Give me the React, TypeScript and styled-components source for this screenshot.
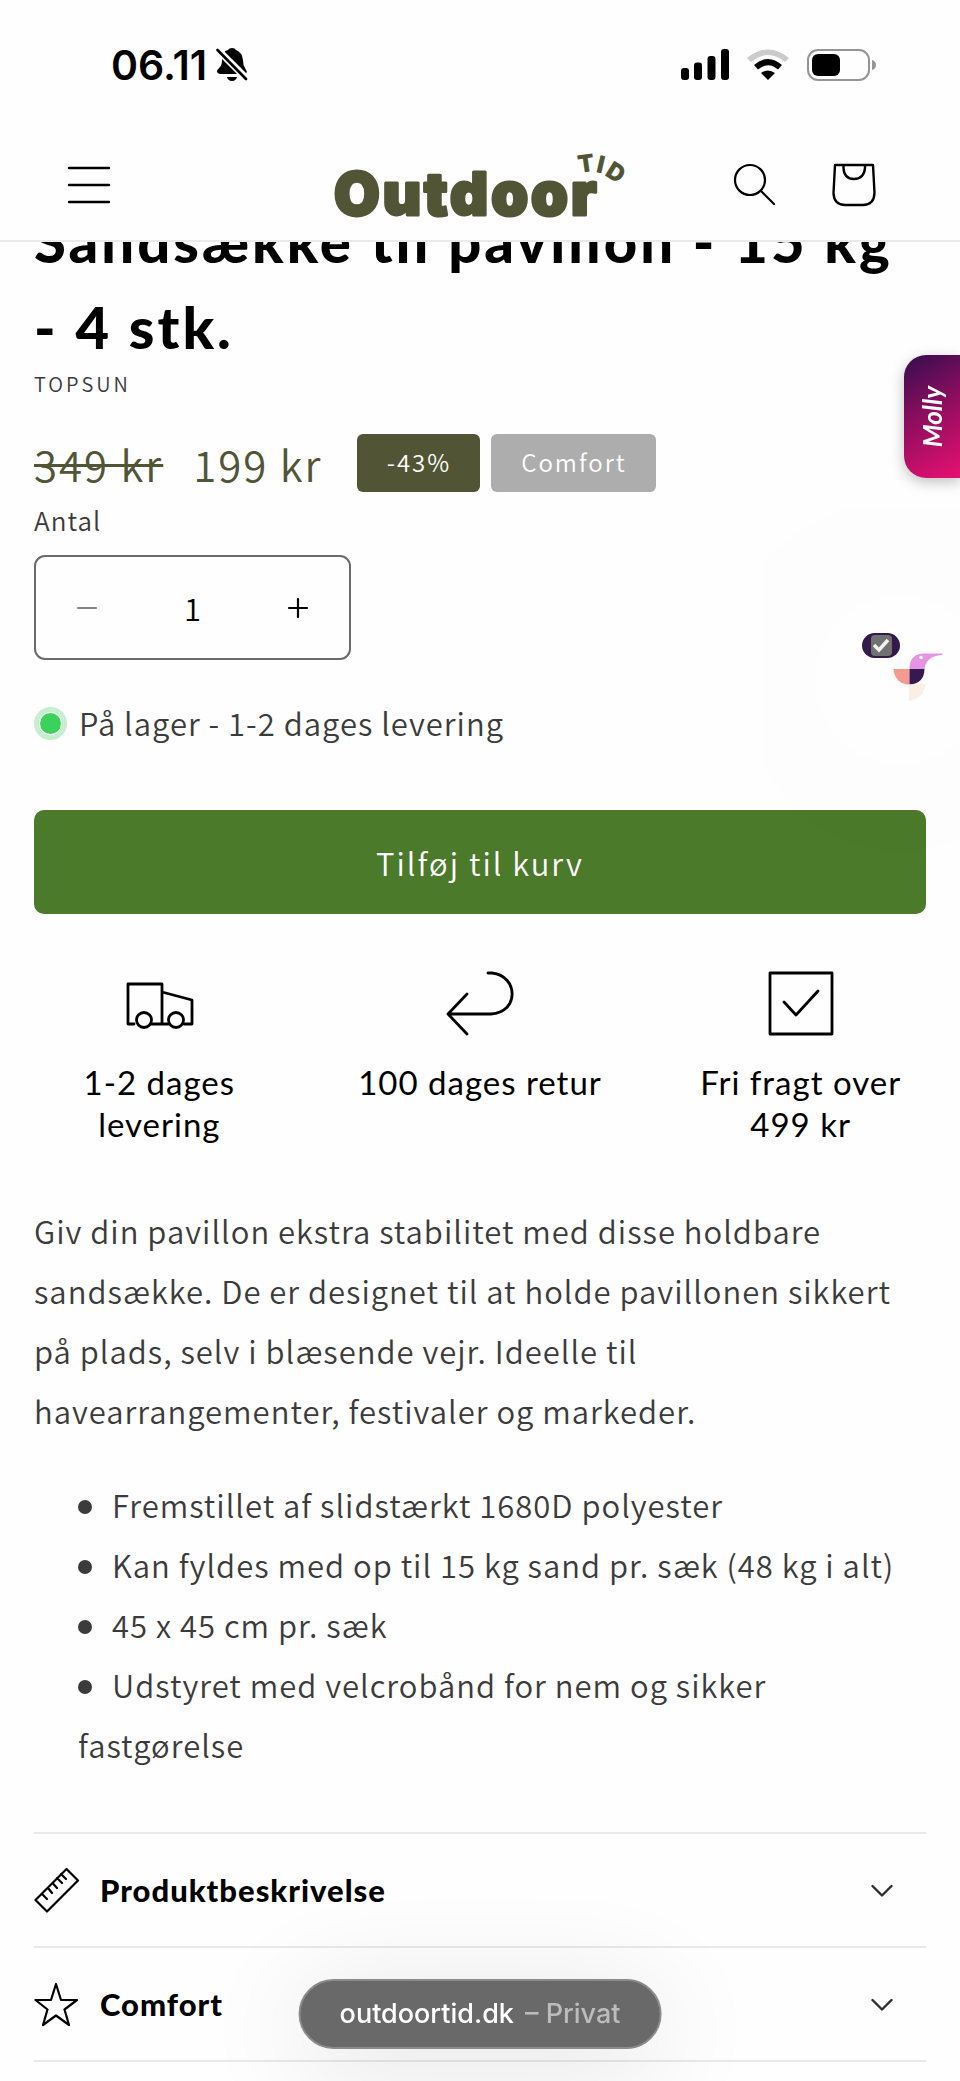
import React, { useState } from "react";
import styled, { createGlobalStyle } from "styled-components";

const bodyFont = '"Noto Sans CJK JP", "Noto Sans", sans-serif';
const headingFont = 'Lato, "Open Sans", sans-serif';
const systemFont = 'Inter, "Liberation Sans", sans-serif';
const olive = "#515536";
const ink = "#3b3b3b";

const GlobalStyle = createGlobalStyle`
  *, *::before, *::after { box-sizing: border-box; }
  body { margin: 0; background: #fefefe; color: ${ink}; font-family: ${bodyFont}; font-weight: 350; }
  button, input { font: inherit; color: inherit; letter-spacing: inherit; }
  button { border: 0; padding: 0; background: none; cursor: pointer; }
  h1, h2, p, ul, dl { margin: 0; padding: 0; }
`;

const Page = styled.div`
  position: relative;
  min-height: 100vh;
  overflow: hidden;
`;

const Top = styled.div`
  position: relative;
  z-index: 2;
  background: #fefefe;
  border-bottom: 2px solid #e9e9e9;
`;

const StatusBar = styled.div`
  display: flex;
  justify-content: space-between;
  align-items: center;
  height: 130px;
  padding: 0 83px 0 111px;
  color: #000;
`;

const StatusGroup = styled.div<{ $gap: number }>`
  display: flex;
  align-items: center;
  gap: ${(p) => p.$gap}px;
`;

const Clock = styled.time`
  font: 600 41px/48px ${systemFont};
`;

const Header = styled.header`
  display: grid;
  grid-template-columns: 1fr auto 1fr;
  align-items: center;
  height: 110px;
  padding: 0 82px 0 65px;
`;

const HeaderActions = styled.div`
  display: flex;
  justify-content: flex-end;
  gap: 52px;
`;

const IconButton = styled.button`
  display: flex;
  align-items: center;
  justify-content: center;
  width: 48px;
  height: 48px;
  color: #000;
`;

const LogoLink = styled.a`
  display: block;
  height: 80px;
  svg { display: block; overflow: visible; }
`;

const Main = styled.main`
  position: relative;
  margin-top: -44px;
  padding: 0 34px 20px;
`;

const Title = styled.h1`
  color: #000;
  font: 900 58px/86px ${headingFont};
  letter-spacing: 3px;
`;

const TitleTail = styled.span`
  white-space: nowrap;
`;

const Vendor = styled.p`
  font-size: 20px;
  line-height: 28px;
  letter-spacing: 3px;
`;

const PriceRow = styled.div`
  display: flex;
  align-items: center;
  margin-top: 33px;
  height: 64px;
  color: ${olive};
  font-size: 42px;
  letter-spacing: 2px;
`;

const OldPrice = styled.s`
  margin-right: 30px;
  text-decoration-thickness: 3px;
`;

const Price = styled.span`
  margin-right: 24px;
`;

const Badge = styled.span<{ $bg: string; $width: number }>`
  display: flex;
  align-items: center;
  justify-content: center;
  height: 58px;
  min-width: ${(p) => p.$width}px;
  margin-left: 11px;
  padding-bottom: 4px;
  border-radius: 6px;
  background: ${(p) => p.$bg};
  color: #fff;
  font-size: 24px;
  letter-spacing: 2px;
`;

const FieldLabel = styled.label`
  display: block;
  margin-top: 3px;
  font-size: 26px;
  line-height: 44px;
  letter-spacing: 1px;
`;

const Quantity = styled.div`
  display: grid;
  grid-template-columns: 102px 1fr 102px;
  width: 317px;
  height: 105px;
  margin-top: 13px;
  border: 2px solid #6b6b6b;
  border-radius: 11px;
  color: #000;
`;

const StepButton = styled.button`
  display: flex;
  align-items: center;
  justify-content: center;
  &:disabled { color: #858585; cursor: default; }
`;

const QuantityInput = styled.input`
  width: 100%;
  min-width: 0;
  border: 0;
  padding: 0;
  background: none;
  text-align: center;
  font-size: 31px;
`;

const Stock = styled.p`
  display: flex;
  align-items: center;
  gap: 12px;
  margin-top: 33px;
  font-size: 31px;
  line-height: 60px;
  letter-spacing: 1px;
`;

const StockDot = styled.span`
  width: 33px;
  height: 33px;
  border: 5px solid #c6efcf;
  border-radius: 50%;
  background: #3bd25c;
  background-clip: content-box;
  padding: 1px;
`;

const CartButton = styled.button`
  display: block;
  width: 100%;
  height: 104px;
  margin-top: 57px;
  border-radius: 10px;
  background: #4b7a2b;
  color: #fff;
  font-size: 31px;
  letter-spacing: 2px;
`;

const Perks = styled.ul`
  display: grid;
  grid-template-columns: repeat(3, 1fr);
  column-gap: 70px;
  margin-top: 57px;
  list-style: none;
  color: #000;
`;

const Perk = styled.li`
  display: flex;
  flex-direction: column;
  align-items: center;
  gap: 24px;
  text-align: center;
  font: 400 33px/42px ${headingFont};
  letter-spacing: 1px;
  svg { display: block; }
`;

const PerkLabel = styled.span<{ $width: number }>`
  max-width: ${(p) => p.$width}px;
`;

const Description = styled.div`
  margin-top: 56px;
  font-size: 31px;
  line-height: 60px;
  letter-spacing: 1px;
`;

const Features = styled.ul`
  margin-top: 34px;
  padding-left: 44px;
  list-style: none;
`;

const Feature = styled.li`
  &::before {
    content: "";
    display: inline-block;
    width: 14px;
    height: 14px;
    margin-right: 20px;
    border-radius: 50%;
    background: ${ink};
    vertical-align: 4px;
  }
`;

const Accordions = styled.div`
  margin-top: 57px;
  border-bottom: 2px solid #e9e9e9;
`;

const AccordionHeading = styled.h2`
  border-top: 2px solid #e9e9e9;
`;

const AccordionButton = styled.button`
  display: flex;
  align-items: center;
  gap: 20px;
  width: 100%;
  height: 112px;
  padding-right: 33px;
  color: #000;
  font: 900 31px/40px ${headingFont};
  letter-spacing: 1px;
  text-align: left;
  svg:last-child { margin-left: auto; }
`;

const MollyTab = styled.button`
  position: fixed;
  z-index: 3;
  top: 355px;
  right: 0;
  display: flex;
  align-items: center;
  justify-content: center;
  width: 56px;
  height: 123px;
  border-radius: 22px 0 0 22px;
  background: linear-gradient(150deg, #3d0d50 5%, #8c0d5e 45%, #e0106f 95%);
  box-shadow: 0 4px 14px rgba(0, 0, 0, 0.25);
  color: #fff;
  font: italic 700 26px/30px ${headingFont};
`;

const MollyText = styled.span`
  writing-mode: vertical-rl;
  transform: rotate(180deg);
`;

const Assistant = styled.button`
  position: absolute;
  z-index: 1;
  top: 595px;
  right: -25px;
  width: 170px;
  height: 170px;
  border-radius: 50%;
  background: #fefefe;
  box-shadow: 0 0 240px 60px rgba(20, 20, 70, 0.015);
  svg { display: block; }
`;

const AddressPill = styled.a`
  position: fixed;
  z-index: 3;
  bottom: 32px;
  left: 50%;
  transform: translateX(-50%);
  display: flex;
  align-items: center;
  gap: 11px;
  height: 70px;
  padding: 0 39px;
  border: 2px solid #8b8b8b;
  border-radius: 35px;
  background: #696969;
  box-shadow: 0 16px 110px rgba(0, 0, 0, 0.12);
  color: #fff;
  font: 500 27px/32px ${systemFont};
  text-decoration: none;
  white-space: nowrap;
`;

const PrivateTag = styled.span`
  color: #bcbcbc;
`;

const line = { fill: "none", stroke: "currentColor", strokeLinecap: "round" as const, strokeLinejoin: "round" as const };

const BellOff = () => (
  <svg width="32" height="34" viewBox="0 0 32 34" aria-label="Lydløs">
    <path d="M5 26 Q1 26 1 23 Q1 22 4 19 Q6 17 6 12 Q6 3 12 2 Q13 0 16 0 Q19 0 20 2 Q26 4 27 12 Q27 17 29 20 L31 24 L29 26 Z" fill="#000" />
    <path d="M11 29 H21 Q20 33 16 33 Q12 33 11 29 Z" fill="#000" />
    <path d="M0 0 L31 31" stroke="#fefefe" strokeWidth="7" />
    <path d="M1.5 2 L30 31" stroke="#000" strokeWidth="2.6" strokeLinecap="round" />
  </svg>
);

const Signal = () => (
  <svg width="49" height="32" viewBox="0 0 49 32" aria-label="Signal">
    <rect x="1" y="19" width="8" height="12" rx="3" />
    <rect x="14" y="13.500" width="8" height="17.500" rx="3" />
    <rect x="27.500" y="7" width="8" height="24" rx="3" />
    <rect x="41" y="0" width="8" height="31" rx="3" />
  </svg>
);

const Wifi = () => (
  <svg width="44" height="32" viewBox="0 0 44 32" aria-label="Wi-Fi">
    <path d="M1 9 Q22 -8 43 9 L39 13 Q22 -1 5 13 Z" fill="#cbcbcb" />
    <path d="M8 16 Q22 4 36 16 L32 20.500 Q22 12 12 20.500 Z" />
    <path d="M15 24 Q22 19 29 24 L22 31 Z" />
  </svg>
);

const Battery = () => (
  <svg width="70" height="32" viewBox="0 0 70 32" aria-label="Batteri">
    <rect x="1" y="1" width="61" height="30" rx="10" fill="none" stroke="#959595" strokeWidth="2" />
    <rect x="5" y="5" width="28" height="22" rx="6" />
    <path d="M65 11 Q69 12 69 16 Q69 20 65 21 Z" fill="#959595" />
  </svg>
);

const Logo = () => (
  <svg width="296" height="80" viewBox="0 0 296 80" role="img" aria-label="Outdoor TID" fill={olive} stroke={olive} fontFamily="Inter, sans-serif">
    <text x="10" y="70" fontSize="59" fontWeight="900" strokeWidth="3" strokeLinejoin="round" letterSpacing="3">Outdoor</text>
    <g fontSize="24" fontWeight="900" strokeWidth="0" textAnchor="middle">
      <text transform="translate(262 18) rotate(-8)" y="9">T</text>
      <text transform="translate(277 19) rotate(13)" y="9">I</text>
      <text transform="translate(292 27) rotate(32)" y="9">D</text>
    </g>
  </svg>
);

const Chevron = () => (
  <svg width="22" height="14" viewBox="0 0 22 14" {...line} stroke="#2e2e2e" strokeWidth="2.400">
    <path d="M1.500 3 L11 12.500 L20.500 3" />
  </svg>
);

const Bird = () => (
  <svg width="170" height="170" viewBox="815 595 170 170" aria-hidden="true">
    <rect x="862" y="633" width="38" height="25" rx="12.500" fill="#34194d" />
    <rect x="871" y="635" width="21" height="21" rx="4" fill="#717171" />
    <path d="M874 645 L879 650 L888 640" fill="none" stroke="#f1f1f1" strokeWidth="3.500" />
    <path d="M893.500 669 H909.500 V684.500 A15.500 15.500 0 0 1 893.500 669 Z" fill="#f49a90" />
    <path d="M909.500 669 V668 Q910 653.500 924 653.500 H942 Q943 654 942 655 Q926 656 924.500 669 Z" fill="#e594e4" />
    <path d="M909.500 669 H924.500 Q924 684 909.500 684.500 Z" fill="#38194f" />
    <path d="M909 684.500 Q916 684 918 684 H925 Q925 698 909 701 Z" fill="#faeee5" />
    <circle cx="921" cy="657.500" r="1.800" fill="#fff" />
  </svg>
);

const perks = [
  {
    label: "1-2 dages levering",
    width: 190,
    icon: <path d="M10 53 H4 V13 H38 V53 H25 M38 21 L68 29 V53 H60 M45 53 H38" />,
    wheels: true,
  },
  {
    label: "100 dages retur",
    width: 270,
    icon: <path d="M43 2 H47 C74 5 74 42 46 43 H3 M22 23 L3 43 L22 63" />,
  },
  {
    label: "Fri fragt over 499 kr",
    width: 220,
    icon: <path d="M4 2 H66 V63 H4 Z M18 31 L30 44 L52 20" />,
  },
];

const Ruler = () => (
  <svg width="46" height="46" viewBox="0 0 46 46" {...line} strokeWidth="2.200">
    <path d="M1.500 33 L32.500 2 L44 13.500 L13 44.500 Z M8 27 L13 32 M14 21 L18 26 M18.500 16 L23 21 M23 11 L28 16 M27 7 L32 12" />
  </svg>
);

const Star = () => (
  <svg width="46" height="46" viewBox="0 0 46 46" {...line} strokeWidth="2.200">
    <path d="M22 3 L27 19 H43 L30.500 28.500 L35 44 L22 34.500 L9 44 L13.500 28.500 L1.500 19 H17 Z" />
  </svg>
);

const features = [
  "Fremstillet af slidstærkt 1680D polyester",
  "Kan fyldes med op til 15 kg sand pr. sæk (48 kg i alt)",
  "45 x 45 cm pr. sæk",
  "Udstyret med velcrobånd for nem og sikker fastgørelse",
];

export default function App() {
  const [quantity, setQuantity] = useState(1);
  return (
    <Page>
      <GlobalStyle />
      <Top>
        <StatusBar>
          <StatusGroup $gap={9}>
            <Clock>06.11</Clock>
            <BellOff />
          </StatusGroup>
          <StatusGroup $gap={17}>
            <Signal />
            <Wifi />
            <Battery />
          </StatusGroup>
        </StatusBar>
        <Header>
          <IconButton aria-label="Menu">
            <svg width="44" height="40" viewBox="0 0 44 40" {...line} strokeWidth="2.400">
              <path d="M2 3 H42 M2 20 H42 M2 37 H42" />
            </svg>
          </IconButton>
          <LogoLink href="#" aria-label="Outdoor TID">
            <Logo />
          </LogoLink>
          <HeaderActions>
            <IconButton aria-label="Søg">
              <svg width="44" height="44" viewBox="0 0 44 44" {...line} strokeWidth="2.200">
                <circle cx="18" cy="17" r="15" />
                <path d="M29 28 L42 41" />
              </svg>
            </IconButton>
            <IconButton aria-label="Kurv">
              <svg width="44" height="44" viewBox="0 0 44 44" {...line} strokeWidth="2.400">
                <path d="M3 2 H41 L42.500 30 Q42 42 31 42 H13 Q2 42 1.500 30 Z M11.500 2 V5 Q12 16 22 16 Q32 16 33 5 V2" />
              </svg>
            </IconButton>
          </HeaderActions>
        </Header>
      </Top>

      <Main>
        <Title>
          Sandsække til pavillon - 15 kg <TitleTail>- 4 stk.</TitleTail>
        </Title>
        <Vendor>TOPSUN</Vendor>
        <PriceRow>
          <OldPrice>349 kr</OldPrice>
          <Price>199 kr</Price>
          <Badge $bg={olive} $width={123}>-43%</Badge>
          <Badge $bg="#adadad" $width={165}>Comfort</Badge>
        </PriceRow>
        <FieldLabel htmlFor="quantity">Antal</FieldLabel>
        <Quantity>
          <StepButton aria-label="Færre" disabled={quantity < 2} onClick={() => setQuantity(quantity - 1)}>
            <svg width="22" height="22" viewBox="0 0 22 22" {...line} strokeWidth="2.200"><path d="M2 11 H20" /></svg>
          </StepButton>
          <QuantityInput
            id="quantity"
            inputMode="numeric"
            value={quantity}
            onChange={(e) => setQuantity(Math.max(1, Number(e.target.value) || 1))}
          />
          <StepButton aria-label="Flere" onClick={() => setQuantity(quantity + 1)}>
            <svg width="22" height="22" viewBox="0 0 22 22" {...line} strokeWidth="2.200"><path d="M2 11 H20 M11 2 V20" /></svg>
          </StepButton>
        </Quantity>
        <Stock>
          <StockDot />
          På lager - 1-2 dages levering
        </Stock>
        <CartButton>Tilføj til kurv</CartButton>
        <Perks>
          {perks.map((perk) => (
            <Perk key={perk.label}>
              <svg width="70" height="66" viewBox="0 0 70 66" {...line} strokeWidth="2.800">
                {perk.icon}
                {perk.wheels && (
                  <>
                    <circle cx="20" cy="49" r="7.500" fill="#fefefe" />
                    <circle cx="52" cy="49" r="7.500" fill="#fefefe" />
                  </>
                )}
              </svg>
              <PerkLabel $width={perk.width}>{perk.label}</PerkLabel>
            </Perk>
          ))}
        </Perks>
        <Description>
          <p>
            Giv din pavillon ekstra stabilitet med disse holdbare sandsække. De er designet til at holde
            pavillonen sikkert på plads, selv i blæsende vejr. Ideelle til havearrangementer, festivaler og
            markeder.
          </p>
          <Features>
            {features.map((feature) => (
              <Feature key={feature}>{feature}</Feature>
            ))}
          </Features>
        </Description>
        <Accordions>
          <AccordionHeading>
            <AccordionButton aria-expanded={false}>
              <Ruler />
              Produktbeskrivelse
              <Chevron />
            </AccordionButton>
          </AccordionHeading>
          <AccordionHeading>
            <AccordionButton aria-expanded={false}>
              <Star />
              Comfort
              <Chevron />
            </AccordionButton>
          </AccordionHeading>
        </Accordions>
      </Main>

      <Assistant aria-label="Assistent">
        <Bird />
      </Assistant>
      <MollyTab>
        <MollyText>Molly</MollyText>
      </MollyTab>
      <AddressPill href="#">
        outdoortid.dk <PrivateTag>– Privat</PrivateTag>
      </AddressPill>
    </Page>
  );
}
